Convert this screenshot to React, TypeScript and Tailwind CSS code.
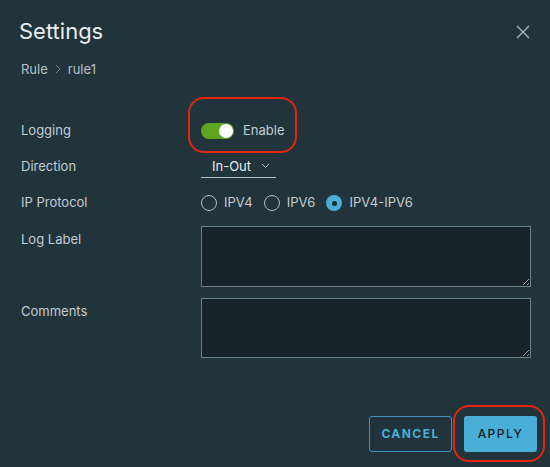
import { useState } from 'react';

const font = { fontFamily: 'Inter, Lato, sans-serif' };

function Toggle({ on }: { on: boolean }) {
  return (
    <div
      className={`flex h-[16px] w-[33px] items-center rounded-full px-[1px] ${
        on ? 'justify-end bg-[#60a521]' : 'justify-start bg-[#6f7f87]'
      }`}
    >
      <div className="h-[14px] w-[14px] rounded-full bg-white" />
    </div>
  );
}

function Radio({ label, checked, onClick }: { label: string; checked: boolean; onClick: () => void }) {
  return (
    <button type="button" onClick={onClick} className="flex items-center gap-[7px]">
      {checked ? (
        <span className="flex h-[16px] w-[16px] items-center justify-center rounded-full bg-[#49afd9]">
          <span className="h-[5px] w-[5px] rounded-full bg-[#1b2a32]" />
        </span>
      ) : (
        <span className="h-[16px] w-[16px] rounded-full border border-[#b4c0c6]" />
      )}
      <span className="text-[13px] text-[#c3cdd2]">{label}</span>
    </button>
  );
}

export default function App() {
  const [protocol, setProtocol] = useState('IPV4-IPV6');

  return (
    <div
      className="relative flex h-[467px] w-[550px] flex-col overflow-hidden bg-[#21333b] pl-[21px] pr-[19px]"
      style={font}
    >
      {/* header */}
      <div className="flex items-start justify-between pt-[17px]">
        <h1 className="-ml-[2px] text-[22px] leading-[28px] text-[#e9ecef]">Settings</h1>
        <svg className="mr-[1px] mt-[8px]" width="14" height="14" viewBox="0 0 14 14">
          <path d="M1 1 L13 13 M13 1 L1 13" stroke="#a9b6bd" strokeWidth="1.4" />
        </svg>
      </div>

      <div className="mt-[16px] flex items-center gap-[7px] text-[13px] leading-[16px] text-[#b4c0c6]">
        <span>Rule</span>
        <svg width="6" height="10" viewBox="0 0 6 10">
          <path d="M1 1 L5 5 L1 9" fill="none" stroke="#6f7f87" strokeWidth="1" />
        </svg>
        <span>rule1</span>
      </div>

      {/* form */}
      <div className="mt-[36px] grid grid-cols-[180px_1fr] text-[13px] text-[#c3cdd2]">
        <div className="flex h-[36px] items-center">Logging</div>
        <div className="flex h-[36px] items-center gap-[9px]">
          <Toggle on />
          <span>Enable</span>
        </div>

        <div className="flex h-[36px] items-center">Direction</div>
        <div className="flex h-[36px] items-center">
          <div className="flex h-[21px] w-[75px] items-start justify-between border-b border-[#b4c0c6] pl-[11px] pr-[6px]">
            <span className="text-[#e9ecef]">In-Out</span>
            <svg className="mt-[6px]" width="9" height="6" viewBox="0 0 9 6">
              <path d="M1 1 L4.5 4.5 L8 1" fill="none" stroke="#b4c0c6" strokeWidth="1" />
            </svg>
          </div>
        </div>

        <div className="flex h-[36px] items-center">IP Protocol</div>
        <div className="flex h-[36px] items-center gap-[11px]">
          {['IPV4', 'IPV6', 'IPV4-IPV6'].map((p) => (
            <Radio key={p} label={p} checked={protocol === p} onClick={() => setProtocol(p)} />
          ))}
        </div>

        <div className="pt-[5px]">
          <div className="pt-[4px]">Log Label</div>
        </div>
        <div className="pt-[5px]">
          <textarea className="block h-[61px] w-full resize border border-[#6f7f87] bg-[#17232a] outline-none" />
        </div>

        <div className="pt-[11px]">
          <div className="pt-[4px]">Comments</div>
        </div>
        <div className="pt-[11px]">
          <textarea className="block h-[60px] w-full resize border border-[#6f7f87] bg-[#17232a] outline-none" />
        </div>
      </div>

      {/* footer */}
      <div className="mt-auto mb-[15px] mr-[-6px] flex justify-end gap-[12px]">
        <button
          type="button"
          className="h-[36px] w-[83px] rounded-[3px] border border-[#3f97bd] text-[12px] font-bold tracking-[0.12em] text-[#49afd9]"
        >
          CANCEL
        </button>
        <button
          type="button"
          className="h-[36px] w-[73px] rounded-[3px] bg-[#49afd9] text-[12px] font-medium tracking-[0.12em] text-[#0d1a20]"
        >
          APPLY
        </button>
      </div>

      {/* annotation rings */}
      <div className="pointer-events-none absolute left-[188px] top-[97px] h-[56px] w-[109px] rounded-[16px] border-[2.5px] border-[#e4260f]" />
      <div className="pointer-events-none absolute left-[453px] top-[405px] h-[57px] w-[92px] rounded-[16px] border-[2.5px] border-[#e4260f]" />
    </div>
  );
}
